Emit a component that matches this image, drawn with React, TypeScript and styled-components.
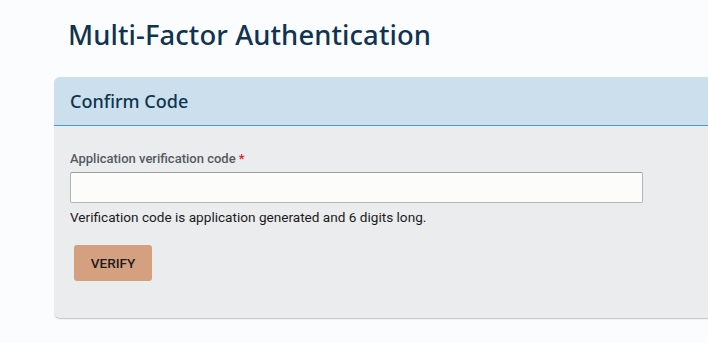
import React from 'react';
import styled, { createGlobalStyle } from 'styled-components';

const GlobalStyle = createGlobalStyle`
  html, body {
    margin: 0;
    padding: 0;
    background: #fbfcfe;
    overflow: hidden;
  }
`;

const Page = styled.div`
  width: 708px;
  height: 343px;
  overflow: hidden;
  padding: 15px 0 0 54px;
  box-sizing: border-box;
`;

const PageTitle = styled.h1`
  margin: 0 0 22px 14px;
  font-family: 'Noto Sans', sans-serif;
  font-weight: 500;
  font-size: 27.4px;
  line-height: 40px;
  color: #0f3350;
  letter-spacing: 0.1px;
`;

const Panel = styled.section`
  width: 700px;
  border-radius: 6px 0 0 6px;
  background: #ebecee;
  border-bottom: 1px solid #c9cacc;
  box-shadow: 0 1px 1px rgba(0, 0, 0, 0.04);
  overflow: hidden;
`;

const PanelHeader = styled.header`
  height: 48px;
  display: flex;
  align-items: center;
  padding-left: 16px;
  background: #cbe0ec;
  border-bottom: 1px solid #4a9ad3;
`;

const PanelTitle = styled.h2`
  margin: 0;
  font-family: 'Noto Sans', sans-serif;
  font-weight: 500;
  font-size: 18px;
  color: #0f3350;
`;

const PanelBody = styled.div`
  padding: 26px 16px 37px;
  display: flex;
  flex-direction: column;
`;

const Label = styled.label`
  font-family: Roboto, sans-serif;
  font-weight: 500;
  font-size: 13px;
  color: #555a5e;
  line-height: 14px;
  margin-bottom: 6px;
`;

const Required = styled.span`
  color: #e21c1c;
`;

const CodeInput = styled.input`
  width: 573px;
  height: 31px;
  box-sizing: border-box;
  background: #fcfcfa;
  border: 1px solid #b4b4b4;
  border-top-color: #9c9c9c;
  border-radius: 2px;
  outline: none;
`;

const Help = styled.p`
  margin: 6px 0 0;
  font-family: Roboto, sans-serif;
  font-size: 13.6px;
  line-height: 16px;
  color: #1b1b1b;
`;

const VerifyButton = styled.button`
  align-self: flex-start;
  margin: 20px 0 0 4px;
  width: 78px;
  height: 36px;
  background: #d4a080;
  border: none;
  border-radius: 3px;
  font-family: Roboto, sans-serif;
  font-weight: 500;
  font-size: 13.6px;
  color: #1c1c1c;
  cursor: pointer;
`;

const App: React.FC = () => (
  <Page>
    <GlobalStyle />
    <PageTitle>Multi-Factor Authentication</PageTitle>
    <Panel>
      <PanelHeader>
        <PanelTitle>Confirm Code</PanelTitle>
      </PanelHeader>
      <PanelBody>
        <Label htmlFor="code">
          Application verification code <Required>*</Required>
        </Label>
        <CodeInput id="code" type="text" />
        <Help>Verification code is application generated and 6 digits long.</Help>
        <VerifyButton>VERIFY</VerifyButton>
      </PanelBody>
    </Panel>
  </Page>
);

export default App;
